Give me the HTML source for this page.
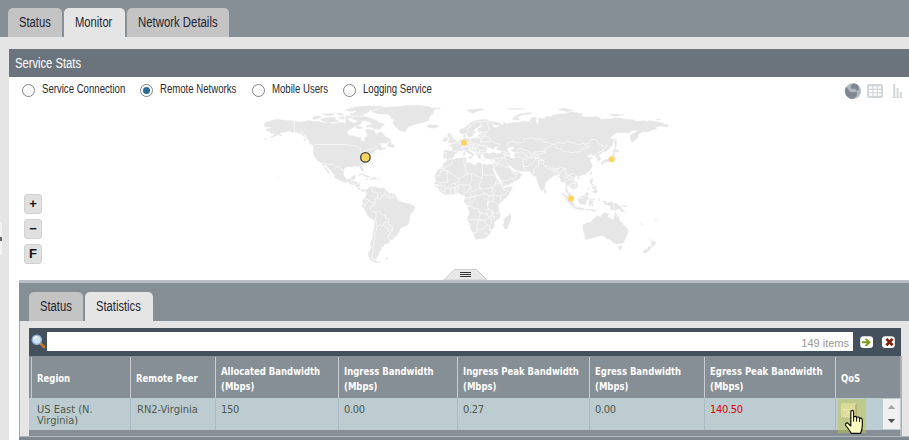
<!DOCTYPE html>
<html><head><meta charset="utf-8">
<style>
*{box-sizing:border-box;margin:0;padding:0}
html,body{width:909px;height:440px;overflow:hidden;background:#fff}
body{position:relative;font-family:"Liberation Sans",sans-serif;color:#222}
.abs{position:absolute}
.nar{position:absolute;white-space:nowrap;transform:scaleX(.8);transform-origin:0 0;line-height:1}
.tab{position:absolute;border-radius:5px 5px 0 0;background:#c4c4c4}
.tab.on{background:#e5e5e5}
.radio{position:absolute;width:13px;height:13px;border-radius:50%;border:1px solid #7d848c;background:#fff}
.zb{position:absolute;left:24px;width:18px;height:20px;background:#e0e0e0;border:1px solid #d2d2d2;border-radius:3px;font:bold 13px/18px "Liberation Sans",sans-serif;text-align:center;color:#111}
.th{position:absolute;top:357px;height:41px;border-left:1px solid #c9cdd1;color:#fff;font:bold 11px/15px "DejaVu Sans Condensed","DejaVu Sans",sans-serif;padding-left:5px;white-space:nowrap}
.th span{display:inline-block;transform:scaleX(.858);transform-origin:0 0}
.num{letter-spacing:-.3px;margin-left:-1px}
.td{position:absolute;top:398px;height:32px;border-left:1px solid #a9bcc5;color:#4d594c;font:11px/11px "DejaVu Sans Condensed","DejaVu Sans",sans-serif;padding:6px 0 0 6px;white-space:nowrap}
</style></head><body>
<!-- top bar -->
<div class="abs" style="left:0;top:0;width:909px;height:37px;background:#868e96"></div>
<div class="abs" style="left:0;top:37px;width:909px;height:403px;background:#e5e5e5"></div>
<div class="tab" style="left:8px;top:8px;width:54px;height:29px"></div>
<div class="tab on" style="left:64px;top:8px;width:61px;height:30px"></div>
<div class="tab" style="left:127px;top:8px;width:102px;height:29px"></div>
<span class="nar" style="left:19px;top:15px;font-size:14px;color:#1e2530">Status</span>
<span class="nar" style="left:75px;top:15px;font-size:14px;color:#1e2530">Monitor</span>
<span class="nar" style="left:138px;top:15px;font-size:14px;color:#1e2530;transform:scaleX(.812)">Network Details</span>
<!-- service stats panel -->
<div class="abs" style="left:9px;top:49px;width:900px;height:28px;background:#6b747d"></div>
<span class="nar" style="left:15px;top:56px;font-size:14px;color:#fff">Service Stats</span>
<div class="abs" style="left:9px;top:77px;width:900px;height:363px;background:#fff"></div>
<!-- radios -->
<div class="radio" style="left:22px;top:84px"></div>
<span class="nar" style="left:42px;top:83px;font-size:12px;color:#2a2a30">Service Connection</span>
<div class="radio" style="left:140px;top:84px"><i style="position:absolute;left:2px;top:2px;width:7px;height:7px;border-radius:50%;background:#2d6b94"></i></div>
<span class="nar" style="left:160px;top:83px;font-size:12px;color:#2a2a30">Remote Networks</span>
<div class="radio" style="left:252px;top:84px"></div>
<span class="nar" style="left:272px;top:83px;font-size:12px;color:#2a2a30">Mobile Users</span>
<div class="radio" style="left:343px;top:84px"></div>
<span class="nar" style="left:363px;top:83px;font-size:12px;color:#2a2a30">Logging Service</span>
<!-- view icons -->
<svg class="abs" style="left:844px;top:82px" width="62" height="18" viewBox="844 82 62 18">
<circle cx="853" cy="91.2" r="8" fill="#b3b9c1"/>
<path d="M846 87.3 L847.8 88.9 L849.4 92 L853.6 92.8 L856.7 92 L856.4 95.2 L854.1 97.9 L850.4 98.5 L846.8 95.9 L845.2 91.5 Z M851.3 85.3 L854.1 83.8 L857.7 85.2 L858.6 89.4 L856.7 90.6 L855.1 87.8 L853 88.9 L851.2 87.8 Z" fill="#7f8791" stroke="#7f8791" stroke-width="0.8" stroke-linejoin="round"/>
<rect x="867" y="84" width="16" height="14" rx="2" fill="#d2d6db"/>
<g fill="#fff"><rect x="869" y="86.5" width="3.3" height="2.2"/><rect x="873.4" y="86.5" width="3.3" height="2.2"/><rect x="877.8" y="86.5" width="3.3" height="2.2"/>
<rect x="869" y="90" width="3.3" height="2.2"/><rect x="873.4" y="90" width="3.3" height="2.2"/><rect x="877.8" y="90" width="3.3" height="2.2"/>
<rect x="869" y="93.5" width="3.3" height="2.2"/><rect x="873.4" y="93.5" width="3.3" height="2.2"/><rect x="877.8" y="93.5" width="3.3" height="2.2"/></g>
<g fill="#d2d6db"><rect x="893.3" y="84" width="2" height="13.5"/><rect x="896.6" y="88" width="2" height="9.5"/><rect x="899.8" y="92" width="2" height="5.5"/><rect x="891.3" y="97" width="11.5" height="0.8"/></g>
</svg>
<!-- MAP -->
<svg class="abs" style="left:240px;top:100px" width="440" height="168" viewBox="240 100 440 168">
<path d="M263.8 125.7L265.5 122.6L269.5 121.3L276.8 119.2L284.2 120.2L294.4 121.2L301.2 121.9L309.1 120.5L312.5 121.3L318.2 121.3L323.9 123.0L329.5 123.0L331.8 124.1L337.4 123.0L343.1 122.4L345.4 123.5L345.9 121.9L345.4 119.0L347.1 118.5L349.9 121.3L352.2 122.4L354.4 123.0L357.3 121.3L361.2 121.3L361.8 123.0L359.0 124.9L355.6 125.8L353.3 127.5L348.8 129.8L347.1 132.0L347.1 133.4L349.3 135.4L354.4 136.0L357.8 137.4L360.9 137.7L361.0 140.0L362.4 141.1L364.1 141.9L364.9 140.5L364.1 138.3L366.9 136.6L367.5 134.3L365.8 132.0L366.3 129.3L370.9 129.4L374.8 130.9L375.4 133.2L377.1 134.0L379.9 132.3L381.0 131.7L383.9 134.9L386.1 137.1L389.0 138.3L390.9 140.5L388.4 141.9L386.1 143.1L380.5 143.1L378.2 144.2L374.8 146.4L376.5 145.1L380.5 144.5L381.3 144.7L380.5 146.2L381.6 147.7L384.4 148.1L386.1 147.3L385.8 148.4L382.2 149.6L379.3 150.7L379.3 149.6L381.0 148.7L378.2 149.0L374.8 150.5L374.0 152.4L374.8 152.8L372.6 153.3L370.3 154.0L370.3 155.3L368.6 156.4L368.0 158.1L368.6 160.1L366.3 161.5L364.6 162.4L362.4 164.3L362.0 166.0L363.5 169.6L363.3 171.5L361.5 170.6L360.3 168.3L360.4 166.6L359.0 166.0L357.3 166.4L354.4 165.7L352.7 166.0L353.1 166.9L351.0 166.8L347.6 166.5L344.2 168.3L343.9 170.6L343.3 174.5L345.4 178.3L347.1 179.4L349.9 178.9L351.4 177.9L351.8 176.2L355.6 175.6L355.0 178.5L354.4 180.2L353.5 182.0L356.7 182.0L359.8 183.0L359.3 185.8L359.5 187.7L361.0 189.8L362.4 190.0L364.1 189.2L366.3 190.1L365.9 191.8L365.2 190.4L363.5 191.7L361.6 190.9L360.1 190.6L357.8 188.7L356.9 187.5L355.0 185.3L354.4 185.0L350.5 184.1L347.6 181.7L344.8 182.2L341.4 181.1L338.6 179.6L335.2 177.9L334.6 175.6L333.5 173.4L331.2 171.1L330.1 169.4L327.2 167.2L326.1 164.5L324.2 164.1L324.2 166.0L326.7 168.9L328.4 171.1L329.5 174.0L327.2 171.9L326.9 170.6L324.6 168.5L324.8 167.2L322.9 165.5L321.5 163.2L319.9 161.5L317.5 160.8L315.9 158.3L315.4 157.2L313.7 154.7L313.3 151.3L313.7 147.7L312.9 145.2L315.4 146.2L314.8 144.5L312.5 143.4L309.7 142.2L309.1 140.5L306.5 138.3L305.2 137.1L302.9 135.4L300.6 133.7L298.4 133.2L295.5 132.3L291.0 132.0L288.2 130.9L285.9 132.0L282.5 132.8L283.1 130.9L280.8 132.6L279.7 133.7L276.3 135.4L272.9 136.9L269.5 137.9L271.8 136.6L275.1 134.3L275.7 133.5L272.9 133.5L270.6 133.2L270.6 132.0L267.2 130.9L266.1 129.8L267.8 128.6L271.8 127.9L271.8 126.9L268.4 126.9L265.5 126.4ZM371.4 111.4L377.1 110.0L380.5 108.3L386.1 107.1L397.5 106.6L408.8 105.4L420.1 105.4L429.2 106.6L431.4 108.3L440.5 107.7L433.7 110.0L433.7 112.8L431.4 115.1L429.2 117.3L429.2 120.2L424.7 121.9L422.4 122.6L416.7 124.1L412.2 125.5L408.8 126.4L406.5 129.2L404.8 132.0L402.0 131.1L399.2 130.3L396.3 127.5L393.5 124.1L392.9 121.3L396.3 120.7L391.8 119.0L390.7 116.2L387.3 113.9L379.3 113.9L374.8 113.0L373.1 112.2ZM363.5 116.5L368.0 117.5L372.6 119.0L377.1 120.7L378.2 122.4L383.9 124.1L384.4 125.2L381.6 126.4L380.5 128.6L379.3 129.8L377.1 129.2L373.7 128.9L372.6 127.5L370.3 126.9L365.8 126.9L366.9 125.8L370.9 124.7L372.0 123.5L369.2 121.9L365.8 120.7L361.2 120.7L357.8 120.7L354.4 119.6L352.7 119.6L352.2 118.5L353.3 116.8L357.8 116.4ZM321.6 120.7L327.2 122.4L335.2 122.1L339.1 121.3L335.2 119.6L335.2 117.3L329.5 117.3L325.0 117.9L320.5 119.0ZM312.5 118.5L314.8 119.2L318.2 118.5L321.6 116.8L319.3 116.0L313.7 116.2ZM352.2 113.4L356.7 111.7L354.4 109.4L349.9 108.0L357.8 106.8L369.2 106.0L380.5 106.2L383.9 107.1L377.1 108.8L372.6 110.0L368.0 110.5L369.2 111.7L365.8 113.4L359.0 113.6ZM349.9 113.4L351.0 115.4L363.5 115.5L363.5 114.1ZM345.9 116.2L351.6 116.2L352.2 117.5L346.5 118.5ZM338.6 117.3L344.2 116.8L344.2 119.0L340.8 119.0ZM321.6 113.9L327.2 115.6L334.0 115.1L334.0 113.9L329.5 113.4ZM336.3 113.4L343.1 113.4L343.1 115.1L338.6 115.1ZM345.4 109.4L352.2 108.8L355.6 110.5L351.0 111.4L345.4 110.0ZM356.7 125.8L362.9 127.5L360.1 128.9L355.6 128.1ZM386.9 146.1L390.7 147.0L394.1 147.2L394.4 146.1L393.5 144.8L391.2 143.6L390.7 141.7L389.2 142.6L387.8 144.5ZM308.8 142.6L312.5 143.1L314.5 145.2L312.0 144.7ZM357.8 175.3L361.2 173.7L363.5 174.0L366.9 175.6L370.1 177.1L366.1 177.6L366.9 176.6L363.5 175.3L361.2 174.7L359.0 175.1ZM369.7 179.2L372.6 177.5L374.8 177.6L376.6 178.9L373.7 179.6ZM365.4 179.2L367.8 179.4L366.9 179.8ZM378.0 179.0L379.8 179.2L379.3 179.7L378.0 179.6ZM366.3 190.1L368.6 187.8L369.4 187.4L372.6 186.2L373.1 187.5L374.8 186.4L377.1 188.0L381.0 188.4L383.9 187.9L385.0 189.2L386.1 190.4L389.5 193.2L392.9 193.3L395.2 194.9L396.3 197.7L397.5 199.4L399.2 200.6L399.7 201.1L403.7 202.8L407.1 203.3L410.5 204.2L414.2 205.9L414.7 208.5L412.2 212.5L409.9 214.7L409.9 218.7L408.8 222.7L407.7 224.9L405.4 226.0L403.1 227.0L399.7 228.9L399.1 231.7L396.9 235.1L394.1 238.3L392.4 239.4L390.1 239.4L388.1 238.5L389.5 240.8L389.0 243.0L383.9 244.2L383.5 246.4L380.5 246.4L381.6 248.1L380.5 251.0L377.6 252.1L379.6 253.8L377.1 256.6L376.0 258.9L376.7 259.5L376.5 261.2L380.3 262.0L378.2 262.6L374.8 262.3L372.6 261.2L370.3 259.5L368.6 256.6L368.6 253.2L370.3 249.8L371.4 247.6L370.5 244.7L370.9 241.9L372.6 238.5L373.1 235.1L373.3 231.7L374.3 228.3L374.6 222.7L374.4 220.7L372.6 219.3L369.2 217.3L367.7 215.6L366.7 213.6L364.6 209.6L363.5 207.4L362.1 206.8L362.0 204.9L363.5 203.7L362.9 202.3L362.4 201.1L363.5 199.4L364.6 198.3L365.2 197.2L366.6 195.7L366.3 192.6L365.9 191.8ZM385.0 258.3L388.4 258.1L387.8 259.1L385.6 259.1ZM443.9 158.1L443.3 156.2L444.1 153.6L443.6 151.3L445.0 150.5L449.6 150.8L452.1 150.8L452.7 148.5L451.3 146.4L448.8 145.6L449.0 145.0L452.3 144.8L452.1 143.7L454.3 143.9L455.9 142.6L458.1 141.8L459.2 140.5L459.8 139.6L462.0 139.4L464.0 139.2L463.5 137.7L463.4 135.4L466.0 134.6L465.7 136.6L465.4 137.7L466.6 138.8L468.3 138.5L470.3 139.0L475.1 138.0L476.8 138.4L477.9 137.1L477.9 135.4L479.0 134.8L481.6 135.2L480.7 133.7L480.7 133.0L485.8 132.5L488.1 132.2L486.4 131.5L482.4 131.8L479.6 132.0L478.2 130.9L478.2 128.6L482.4 126.4L481.3 125.5L479.0 125.8L477.9 127.2L474.5 129.2L473.6 130.9L475.3 132.0L475.4 132.8L472.8 133.7L472.8 136.0L470.3 137.1L468.6 137.1L468.0 136.0L466.8 133.7L466.0 132.6L463.2 134.2L460.6 133.5L459.8 131.5L459.8 129.8L462.6 128.4L465.4 127.5L468.3 125.2L470.0 123.0L472.8 121.9L475.6 120.7L480.1 119.8L483.5 119.6L486.4 119.6L489.2 120.4L488.1 121.1L491.5 121.4L494.9 121.9L500.5 123.3L500.5 124.7L497.1 125.2L493.2 124.5L491.5 124.7L493.4 126.4L493.7 127.2L496.6 127.5L499.4 126.6L499.4 125.5L502.2 124.8L503.9 125.0L503.4 122.4L506.2 123.0L506.2 124.3L508.5 123.3L514.1 122.4L515.3 122.6L520.9 122.1L522.6 121.1L526.6 121.5L531.1 122.4L532.2 122.4L530.0 121.3L530.0 119.6L532.2 117.5L536.2 117.5L536.4 119.6L535.6 121.9L537.3 123.0L536.2 124.7L537.9 124.3L538.5 122.4L539.0 119.6L537.9 118.5L539.6 117.9L542.4 118.5L545.3 118.2L545.8 116.8L551.5 116.4L552.6 115.1L559.4 113.9L565.1 113.7L571.9 112.0L574.2 112.5L581.0 113.4L582.7 114.5L578.7 116.2L582.1 116.5L588.9 117.3L594.5 116.5L599.1 117.3L600.2 119.0L602.5 119.8L604.7 119.0L612.1 119.0L612.7 117.9L619.5 118.1L624.0 118.9L627.4 119.6L634.2 119.8L635.3 121.1L641.0 121.3L644.4 120.7L647.2 121.9L647.8 120.7L653.4 121.1L658.0 122.1L663.6 123.5L669.3 125.2L666.5 126.9L660.2 125.9L656.8 126.9L655.1 126.7L656.8 129.2L652.3 129.8L647.2 132.0L642.1 132.0L639.3 133.7L637.6 134.5L638.7 136.6L637.6 137.9L635.3 140.0L631.9 142.2L630.2 137.7L630.2 135.4L634.2 133.4L636.4 131.5L639.3 129.2L635.3 130.3L631.9 130.3L629.7 132.8L624.0 132.6L616.1 132.8L612.7 134.9L609.8 138.3L613.8 139.7L613.2 142.2L612.7 145.1L608.1 149.6L604.7 151.5L602.5 151.9L601.0 153.6L598.5 155.0L599.6 157.0L600.7 159.2L600.2 160.1L597.4 161.0L597.4 159.2L597.7 158.1L595.7 157.0L595.7 155.0L594.9 154.7L591.7 155.8L592.3 153.9L591.1 153.8L588.9 155.6L587.4 155.8L587.7 157.0L588.9 157.8L590.9 157.2L592.8 157.8L590.6 159.2L589.2 160.4L590.4 161.5L591.1 163.2L592.3 164.9L592.1 166.6L590.6 168.9L589.4 171.1L587.7 172.3L586.0 174.0L583.2 174.7L579.8 175.8L578.7 175.9L579.0 177.0L576.4 175.5L574.7 176.8L573.8 178.5L575.3 180.7L577.0 182.4L577.9 185.3L577.6 187.0L575.3 188.3L573.2 190.1L573.0 188.7L570.8 187.8L570.2 186.4L568.5 185.6L567.9 184.7L567.4 185.8L566.8 188.1L567.7 190.4L568.5 192.3L570.2 193.2L571.3 194.9L571.3 197.2L572.1 198.4L571.3 198.5L568.8 196.8L567.8 193.8L567.0 192.4L565.4 190.7L565.7 188.7L565.9 186.4L564.8 183.0L564.5 181.3L562.3 182.1L560.9 181.9L560.9 179.0L559.4 177.3L558.1 174.7L556.6 175.1L554.9 175.4L552.6 175.8L552.1 177.3L550.4 177.9L547.3 181.1L544.9 182.4L544.9 185.0L544.5 188.3L543.6 189.6L542.7 190.0L541.9 190.9L540.5 189.2L539.0 185.8L538.5 183.6L537.3 181.3L536.6 178.5L536.4 176.2L536.0 176.0L534.5 176.4L533.4 176.0L532.2 174.7L533.4 174.0L531.7 173.4L530.3 171.9L529.4 171.2L524.3 171.5L519.0 170.9L518.1 169.4L515.8 169.9L513.6 168.7L511.6 167.2L510.7 165.8L509.3 165.7L508.5 166.5L509.3 167.7L510.7 169.8L511.0 170.9L512.2 170.6L512.4 172.3L515.3 172.7L517.5 170.6L517.9 170.2L518.1 172.3L520.7 173.4L521.8 174.5L520.4 176.9L519.5 178.5L517.5 179.7L514.1 181.3L513.0 182.3L509.6 184.1L505.1 185.5L503.4 185.6L502.6 183.2L502.2 181.3L500.5 179.0L498.5 175.6L496.3 172.3L494.3 168.3L493.7 166.6L493.1 168.3L492.6 168.5L491.8 167.7L491.0 166.1L490.7 164.7L492.9 164.5L493.6 163.2L494.4 161.2L494.8 159.8L495.1 158.4L493.2 158.3L490.9 159.1L488.6 158.9L486.9 158.4L485.2 158.4L483.9 156.6L484.1 155.3L483.8 154.7L483.5 154.0L481.3 153.8L480.7 154.7L479.8 154.2L480.1 155.5L481.3 157.0L480.1 157.5L480.1 158.7L479.0 158.4L478.2 157.5L477.9 156.1L476.8 155.0L476.1 153.6L476.0 152.4L473.9 151.3L471.7 150.2L470.7 148.9L469.7 149.1L469.5 148.4L468.0 148.7L468.1 149.9L469.5 150.7L470.2 152.0L472.2 152.7L472.2 153.1L475.1 154.5L474.8 154.9L473.4 154.2L472.9 155.0L473.5 155.8L472.8 156.5L471.9 157.0L472.2 155.8L471.9 154.7L470.3 153.9L468.8 153.2L467.7 152.4L466.0 151.3L465.4 150.2L464.1 149.7L462.6 150.4L460.9 151.2L459.5 150.8L458.1 151.0L457.6 152.1L456.6 153.2L454.9 153.8L453.8 155.3L454.1 156.2L453.3 157.3L451.8 158.3L449.0 158.4L447.9 159.2L447.0 158.3L445.8 157.9ZM447.4 159.5L450.8 160.0L453.0 159.6L455.8 158.7L457.5 158.2L462.0 158.1L465.2 157.8L466.6 158.1L466.0 159.2L466.6 160.9L465.4 161.5L466.6 162.4L468.3 162.7L471.4 163.4L473.9 164.9L475.6 165.7L476.8 164.9L476.8 163.2L478.5 162.7L480.1 163.1L482.4 164.1L486.9 165.0L489.2 164.3L490.7 164.7L491.0 166.1L492.0 168.3L493.2 170.6L494.3 172.8L494.5 174.0L496.0 176.2L496.3 178.5L497.7 179.6L498.8 182.4L500.5 183.4L503.0 185.8L503.1 187.0L504.5 188.1L507.3 187.3L512.1 186.5L511.9 188.2L509.6 192.1L508.5 194.9L506.2 197.2L502.8 200.6L501.1 201.9L499.4 203.4L498.5 205.7L498.3 207.4L498.8 209.1L498.8 210.8L500.0 211.9L500.1 216.4L498.8 218.7L496.0 220.2L493.7 222.7L494.3 224.9L494.3 227.2L491.5 228.9L491.2 230.6L490.9 232.3L489.2 234.0L488.1 235.5L485.8 237.4L483.5 238.4L479.0 238.7L476.8 239.4L474.9 238.7L474.7 236.8L473.7 234.0L472.8 232.4L471.3 230.6L470.5 226.0L470.3 224.9L468.3 221.0L467.5 219.3L467.7 217.0L469.4 214.2L469.7 212.5L468.8 210.2L468.0 206.8L467.5 205.1L464.9 202.8L464.1 200.8L464.9 198.9L465.2 196.6L464.2 194.9L462.0 195.0L460.3 193.8L459.2 192.9L456.9 192.9L455.2 193.4L451.8 194.6L449.6 194.1L445.6 195.0L443.6 193.8L441.1 192.2L439.0 190.4L438.8 188.9L437.1 187.8L435.2 186.0L435.1 184.7L434.3 183.4L435.4 181.9L435.6 178.5L434.8 176.2L436.0 173.2L437.7 170.6L439.4 168.6L442.8 166.8L443.1 164.9L443.6 163.2L446.2 161.7ZM509.9 213.6L511.3 217.6L510.4 219.3L507.9 227.2L507.3 228.3L505.1 228.9L503.6 226.6L503.1 224.9L504.3 222.7L503.9 219.3L506.2 217.8L508.5 215.5ZM582.8 224.9L583.2 229.4L584.3 234.0L585.1 236.2L584.3 238.8L587.7 239.6L590.0 238.4L594.5 237.4L596.8 236.6L600.2 235.8L602.7 235.7L605.9 237.0L607.6 239.4L610.2 237.4L609.8 239.6L611.0 240.2L612.3 241.3L613.2 243.0L616.6 243.9L618.3 243.3L619.9 244.3L621.7 242.9L624.0 242.2L624.9 239.6L625.7 237.4L627.2 235.1L628.0 232.3L627.6 228.9L625.1 226.6L623.4 224.9L622.3 222.7L619.8 221.5L619.5 219.8L618.8 217.0L617.2 216.2L616.6 214.2L615.5 212.1L614.6 214.7L614.4 217.6L613.6 219.8L611.9 219.8L610.2 218.1L607.6 217.0L608.1 215.3L608.9 213.8L607.0 213.6L604.2 212.8L602.5 213.9L601.3 215.3L600.8 217.0L599.1 216.8L597.9 215.6L596.2 216.4L594.5 218.5L592.6 219.5L592.5 221.0L591.1 222.2L588.9 222.7L586.3 223.3L583.9 224.7ZM618.0 246.1L622.1 246.3L621.7 248.9L619.5 249.4L618.6 247.9ZM649.7 239.0L651.7 241.0L653.2 241.7L656.3 242.7L654.6 244.7L652.6 247.1L652.1 245.9L650.9 244.5L652.0 243.0L651.4 241.3ZM649.7 245.9L651.5 247.0L649.8 249.6L647.8 251.5L645.5 252.8L642.7 252.1L644.4 250.2L647.2 248.7L648.9 247.0ZM562.0 193.7L564.5 194.1L567.7 196.8L571.3 200.0L572.5 202.3L574.2 203.6L573.9 206.6L572.5 206.6L570.0 204.5L567.9 201.7L565.9 198.3L564.0 196.3ZM573.2 207.7L574.7 206.8L577.0 207.5L579.8 207.4L581.9 207.9L583.8 208.8L583.7 209.9L579.8 209.4L576.4 208.8L573.6 207.9ZM584.9 209.3L588.9 209.4L593.4 209.4L595.1 210.4L597.9 209.5L595.7 211.1L594.0 211.7L591.1 210.2L586.6 210.2ZM577.6 198.3L579.8 198.1L582.1 196.4L584.9 194.3L586.6 192.1L588.9 194.0L587.7 195.2L587.5 197.7L588.9 198.9L587.2 200.0L586.0 202.3L585.5 204.3L583.8 204.5L581.0 203.9L578.9 203.3L578.7 201.5L577.6 199.7ZM589.8 199.2L591.1 198.5L593.4 199.0L595.7 198.2L594.5 199.5L591.1 199.4L590.4 201.1L591.7 201.1L593.7 201.0L592.3 202.3L592.8 204.5L593.4 206.2L591.7 205.3L591.1 203.1L590.4 203.4L590.5 206.2L589.4 206.2L589.4 204.0L588.7 203.1ZM598.5 197.7L599.6 198.9L599.1 200.9L598.5 199.4ZM602.5 200.9L605.9 200.9L607.0 203.7L610.2 201.8L613.8 202.9L617.8 204.3L619.5 206.2L621.5 206.8L620.6 207.7L622.0 209.1L624.6 211.7L621.2 211.3L619.5 209.1L617.2 208.7L616.1 210.2L613.8 210.3L611.0 209.4L610.4 207.9L611.3 207.4L610.2 205.9L607.6 205.0L604.7 204.5L604.5 203.2L605.9 202.6L603.6 202.5ZM622.3 206.2L625.1 205.7L626.6 204.8L626.3 206.2L624.0 207.1ZM590.6 179.0L592.5 179.0L592.3 181.9L591.7 183.9L594.5 185.3L594.0 185.8L591.1 184.5L590.6 183.6L590.0 181.9ZM592.3 186.6L594.5 187.0L596.2 185.8L596.2 188.1L594.0 189.2L592.8 188.7ZM592.3 192.1L594.0 190.4L596.2 188.9L597.4 191.5L596.2 193.4L594.5 192.3ZM587.0 190.4L589.4 187.5L589.2 188.7L587.5 190.6ZM602.4 161.5L604.2 159.8L607.9 159.6L609.3 157.8L611.0 157.8L612.7 155.3L612.7 153.9L613.8 153.1L614.6 154.4L614.9 155.8L613.8 157.2L613.6 159.2L612.9 160.1L612.3 160.0L611.2 160.7L609.3 160.8L609.0 161.9L607.9 162.1L607.0 160.9L604.7 161.2L602.5 161.6ZM601.3 162.1L603.3 161.8L603.0 164.3L601.9 164.7L601.3 163.2ZM604.2 161.6L606.4 161.3L606.2 162.3L604.7 162.9L603.9 162.3ZM613.0 153.0L612.7 151.3L614.6 148.6L616.1 149.8L618.7 150.2L618.9 151.1L616.4 152.4L614.4 151.9ZM614.9 138.5L616.1 140.0L616.6 143.4L616.1 147.1L614.9 147.9L614.9 144.5L614.7 141.1ZM591.7 171.5L592.2 172.3L590.9 175.1L590.1 174.0L591.1 171.7ZM577.2 178.3L579.3 177.3L579.8 177.9L578.1 179.4ZM544.7 189.0L546.7 191.5L545.8 193.0L544.7 193.2L544.4 190.9ZM447.6 143.3L450.1 143.0L453.0 142.6L455.7 142.0L456.0 140.3L454.4 140.0L453.9 138.8L452.4 137.7L451.8 136.7L450.4 136.6L451.8 134.8L449.6 134.6L450.7 133.6L448.4 133.6L447.3 134.9L447.9 136.6L448.7 137.7L450.2 137.8L450.7 139.4L449.0 139.6L449.3 140.5L448.2 141.3L450.1 141.8L449.0 142.2ZM442.8 141.6L447.0 140.9L447.3 139.4L447.9 138.3L446.7 137.4L444.8 137.5L444.5 138.5L442.8 138.8L443.3 140.0ZM426.6 125.8L429.2 124.8L433.7 125.0L436.0 124.7L437.7 125.8L438.6 126.4L437.1 127.2L432.9 128.2L428.6 127.6L429.2 126.9L426.9 126.5L429.2 125.9ZM466.6 110.0L470.0 112.2L472.8 113.2L477.9 111.1L484.7 109.4L480.1 108.8L473.4 109.4ZM512.4 118.9L515.3 119.9L519.2 119.9L517.5 117.0L522.1 115.1L531.1 113.6L532.0 112.8L527.7 112.8L519.8 113.9L516.4 115.6L514.1 117.3ZM561.7 110.5L567.4 111.4L573.0 110.9L567.4 108.8L561.7 108.3L558.3 109.4ZM609.3 114.8L616.1 114.1L624.0 114.8L620.6 115.3L616.1 116.2L611.5 115.4ZM656.3 119.4L660.8 119.2L660.2 119.8L656.8 119.8ZM507.3 108.8L516.4 108.3L524.3 108.3L519.8 109.2L510.7 109.4ZM468.1 157.0L471.8 156.6L471.2 158.4L468.3 157.4ZM463.4 153.6L465.1 153.6L465.0 155.6L463.6 155.8ZM463.8 151.9L464.9 151.3L464.7 153.0L464.1 152.9ZM480.7 159.8L483.9 160.1L481.3 160.4ZM490.7 160.4L493.3 159.6L491.5 160.8ZM279.1 134.9L281.6 134.3L281.4 135.2L279.7 135.7ZM263.8 139.4L267.2 138.5L267.8 138.2L265.0 139.7ZM303.5 138.8L304.9 138.8L305.5 140.9L304.0 140.0ZM639.8 222.9L643.2 225.3L642.5 225.3L639.8 223.4ZM654.9 219.8L656.4 219.8L656.3 220.6L654.9 220.5ZM277.4 177.1L278.5 177.7L277.9 178.5L277.4 177.8Z" fill="#e6e6e6" stroke="#e6e6e6" stroke-width="0.5" stroke-linejoin="round"/>
<path d="M485.8 152.7L486.6 150.2L487.7 148.8L489.0 147.3L491.5 147.9L490.9 148.6L492.0 149.6L494.1 149.1L495.4 148.7L493.7 147.7L496.6 146.8L498.5 146.5L497.1 147.7L496.0 148.7L497.1 149.6L499.1 150.7L501.1 151.6L501.1 153.0L498.3 153.6L495.4 153.2L493.7 152.4L491.8 152.4L489.8 153.3L487.1 153.3ZM507.3 148.5L510.2 147.3L512.4 147.0L514.1 147.3L514.4 148.8L512.1 149.6L511.1 149.8L511.9 151.3L513.8 151.9L513.6 153.3L514.9 153.9L514.1 155.5L515.0 157.8L513.0 158.3L511.0 157.8L509.6 156.6L509.8 154.7L510.5 154.1L508.8 152.1L507.9 151.3L507.3 149.6Z" fill="#fff"/>
<path d="M294.4 121.2L294.4 131.7L296.7 132.0L298.4 133.3L300.6 132.4L302.9 133.7L304.8 135.8L306.9 136.6L306.6 137.7M315.0 144.5L346.3 144.5L347.0 144.8L349.9 145.3L352.7 145.6L354.1 145.3L358.1 146.9L359.5 148.1L360.7 148.7L360.8 151.3L360.0 152.2L360.7 152.8L364.6 151.5L364.6 150.7L367.5 150.3L369.2 149.0L373.1 149.0L374.5 148.0L375.7 146.3L377.1 146.4L377.3 148.1L378.0 148.8M321.5 163.2L324.2 163.0L328.4 164.5L331.6 164.5L331.6 164.0L333.5 164.0L335.7 166.5L337.2 167.2L338.0 166.2L339.3 166.2L341.4 168.9L342.0 170.1L344.0 170.7M349.7 183.6L349.9 182.8L350.2 181.9L351.6 181.9L351.0 180.5L351.0 179.8L353.1 179.8L353.1 181.9L354.1 182.2M353.1 179.8L354.1 179.0M352.1 184.4L352.8 183.7L353.1 183.0L354.1 182.2M353.0 183.7L354.4 184.3L354.8 184.8M355.2 185.3L355.9 184.4L357.8 183.6L359.9 183.0M357.0 187.4L359.3 187.7M360.2 190.8L360.5 189.2M372.9 177.7L372.8 179.6M373.3 186.6L372.0 187.5L371.4 189.6L372.1 190.5L372.6 192.1L374.8 192.1L377.6 193.0L377.3 194.9L377.9 196.8L378.2 198.6M378.2 198.6L379.0 199.1L379.9 199.2L381.6 197.7L382.3 197.5L381.3 195.5L383.0 195.5L385.4 194.1M385.4 194.1L384.6 193.2L386.1 190.4M385.4 194.1L386.1 194.3L386.4 196.0L386.3 197.4L387.5 198.6L389.5 197.7M389.5 197.7L389.2 196.0L388.4 195.5L389.2 194.0L389.4 193.2M389.5 197.7L390.7 197.8L392.3 197.4L394.4 197.5L395.5 195.2M392.3 197.4L392.7 196.0L392.9 193.4M378.2 198.6L375.0 198.1L375.0 198.8L375.7 199.3L374.8 199.4L374.8 200.2L375.5 201.4L374.8 204.8M374.8 204.8L373.9 202.6L371.4 202.6L369.8 200.8L368.8 200.1M368.8 200.1L367.7 199.5L366.4 199.5L364.9 198.4M368.8 200.1L368.7 201.0L367.3 202.9L365.4 203.9L364.6 205.7L363.2 205.0L363.2 203.9M374.8 204.8L371.5 205.9L370.3 208.4L371.4 210.4L372.2 211.3L374.1 210.8L374.1 212.5L375.3 212.5M375.3 212.5L376.3 214.3L375.7 217.3L375.4 219.8L374.4 220.7M375.3 212.5L376.5 212.5L378.8 211.2L380.1 211.1L380.1 213.3L383.9 215.1L385.6 215.6L385.9 218.5L388.1 218.5L388.1 219.6L388.9 220.4L388.4 222.4M388.4 222.4L387.3 221.9L384.2 222.2L383.2 225.1M383.2 225.1L381.3 225.8L380.3 225.0L379.0 224.7L378.0 225.8M375.4 219.8L376.3 222.1L376.9 224.4L377.3 225.8L378.0 225.8M378.0 225.8L376.5 227.7L376.7 230.6L375.2 232.3L374.8 235.1L374.5 237.7L375.0 238.7L374.3 240.8L373.6 242.5L373.8 244.2L372.9 245.9L372.8 248.7L373.1 251.0L372.8 253.2L372.0 255.5L371.1 257.2L372.2 257.8L372.6 258.9L376.6 259.3M376.4 259.7L376.4 262.2M388.4 222.4L388.6 225.0L391.0 225.3L391.4 227.2L392.6 227.3L392.3 229.0M383.2 225.1L385.0 227.0L388.7 228.7L387.7 230.8L390.2 231.0L392.3 229.0M392.3 229.0L393.2 230.2L393.2 230.8L390.9 232.1L388.9 234.2M388.9 234.2L390.7 234.9L393.2 236.4L393.6 238.2M388.9 234.2L388.2 236.8L388.0 238.5M451.6 160.2L452.2 161.8L452.7 163.5L450.0 164.9L447.9 166.1L444.2 167.5L444.2 169.1M439.1 168.6L444.2 168.6M444.2 169.1L444.2 170.6L440.5 170.6L440.5 173.5L439.4 174.0L439.4 175.9L434.8 175.9M444.2 169.1L448.7 171.7M448.7 171.7L446.7 171.7L447.9 181.3L448.1 182.4L443.6 182.4L441.1 182.3L440.3 183.2M440.3 183.2L438.9 181.9L437.7 181.2L435.4 181.9M448.7 171.7L455.5 176.1L455.5 176.6L457.7 177.6L457.8 178.5L458.9 178.4M458.9 178.4L460.7 177.9L467.7 173.4M467.7 173.4L464.9 170.1L465.3 167.9L464.9 165.8M464.9 165.8L464.3 163.6L462.6 161.7L463.5 160.4L463.8 158.2M464.9 165.8L465.8 164.1L467.1 163.3L467.1 162.4M482.4 164.2L482.4 175.1M467.7 173.4L471.1 174.0L472.2 173.5L481.3 177.9L481.3 177.3L482.4 177.3L482.4 175.1M482.4 175.1L495.9 175.1M481.3 177.9L481.3 182.2L480.0 182.3L479.6 184.1L479.2 185.6L480.0 187.5M471.1 174.0L471.7 176.6L472.0 181.3L469.4 183.7L469.4 184.5M458.9 178.4L458.9 181.2L458.1 182.6L455.6 182.7L454.3 183.1M469.4 184.5L468.3 185.2L465.4 184.9L462.6 185.2L460.3 184.3L458.7 184.7L458.2 186.7M454.3 183.1L455.1 184.6L456.5 185.6L456.8 186.5L458.2 186.7M454.3 183.1L451.8 183.9L449.7 184.8L449.1 185.8L448.1 186.6L447.9 188.2M447.9 188.2L445.0 188.4L444.7 187.5L443.9 186.1L441.2 186.2L441.2 185.4L440.3 183.2M441.2 186.0L438.6 185.7L435.2 186.0M438.6 185.7L438.6 186.7L437.1 187.7M435.1 184.6L437.1 184.4L438.5 184.8L437.1 185.0L435.1 185.0M439.0 189.8L441.1 188.7L442.2 189.6L442.4 190.5L441.1 192.2M442.4 190.5L443.6 191.5L444.5 191.4L445.6 195.0M444.5 191.4L445.0 190.4L445.0 188.4M451.0 194.2L450.5 192.3L451.0 189.2L450.8 187.5L453.9 187.4M447.9 188.2L449.0 189.0L451.0 189.2M455.5 193.1L454.8 191.5L454.6 188.7L453.9 187.4L455.1 187.5M455.9 193.0L455.9 189.8L455.0 187.8L455.1 187.5L456.8 186.5M457.2 192.8L457.3 189.8L458.2 188.4L458.2 186.7M463.7 194.7L464.6 192.9L466.9 192.4L468.0 190.4L469.7 187.5L470.6 186.9L470.2 186.0L470.1 185.2L469.4 184.5M470.1 185.2L471.1 186.4L471.1 188.7L469.8 188.7L471.7 191.5M471.7 191.5L475.2 190.9L475.6 189.8L478.7 188.0L480.0 187.5M480.0 187.5L480.8 189.8L481.5 190.6L482.8 191.7L485.1 194.1M471.7 191.5L470.5 193.3L470.7 194.8L472.4 197.5M465.2 197.4L469.2 197.5L472.4 197.5M465.2 198.9L466.9 198.9L466.9 197.4M469.2 197.5L470.5 198.6L469.8 200.2L470.5 200.7L470.4 202.3L468.3 202.6L467.2 203.2L466.7 204.4M472.4 197.5L475.2 196.0M475.2 196.0L475.2 195.0L479.5 195.4L482.4 194.3L485.1 194.1M475.2 196.0L474.3 200.0L472.4 202.3L472.2 204.5L470.4 205.5L468.8 205.2L467.9 206.6M467.9 205.7L468.6 205.0L467.9 206.6L468.8 206.7L472.9 206.7L473.4 208.3L476.2 207.9L476.2 209.1L478.8 209.1L478.9 212.5L481.3 212.3L481.3 214.7M481.3 214.7L479.0 214.7L479.0 218.3L480.6 219.9M467.5 219.6L470.0 219.7L475.1 219.7L480.6 219.9L482.6 220.2M482.6 220.2L480.5 220.4L477.9 220.7L477.9 224.9L476.8 224.9L476.8 228.1M476.8 228.1L476.8 232.2L473.9 232.6L472.8 232.4M476.8 228.1L477.7 230.4L479.8 228.9L483.0 229.1L484.5 227.5L487.4 225.1M487.4 225.1L485.5 223.2L482.8 220.2M487.4 225.1L489.6 225.4L490.3 227.7L490.3 230.4L491.4 230.4M490.3 229.2L489.2 229.4L489.2 230.8L490.3 230.6M489.6 225.4L490.9 224.1L491.5 222.4L491.1 221.0L491.5 218.9L488.5 217.7M482.8 220.2L484.7 220.3L486.8 218.1L488.5 217.7M488.5 217.7L488.3 216.8L491.7 215.9L491.1 215.4L491.5 213.6L491.8 210.8L491.2 210.5M481.3 212.3L482.8 212.7L484.6 213.5L486.9 215.2L487.9 215.2L487.9 213.8L486.3 213.6L486.5 210.8L486.8 209.6L489.0 209.4M489.0 209.4L491.2 210.5M491.8 210.8L492.6 210.8L493.3 213.0L493.1 216.3L494.6 216.6L494.1 219.3L492.9 218.3L491.7 215.9M493.3 213.0L496.6 213.3L500.0 211.9M498.5 205.3L496.7 203.4L492.6 201.1M492.6 201.1L492.6 199.8L493.7 198.1L492.6 195.2M501.1 201.9L500.5 200.9L500.5 196.8L501.6 195.6M492.6 195.2L494.8 194.8L495.0 195.0L497.1 195.9L498.8 196.1L500.5 195.6L501.6 195.6M501.6 195.6L502.8 194.7L505.1 194.3L508.5 190.9L507.3 190.9L503.9 189.8L502.8 187.9L502.6 187.7M502.1 186.0L500.3 184.0L498.3 183.5L497.0 183.1L495.4 183.8M495.4 183.8L495.0 185.6L493.9 186.6L492.9 188.0L492.7 190.3L491.5 191.1L492.6 191.8L494.1 193.9L494.8 194.8M480.8 189.8L482.4 188.3L484.7 189.1L486.9 188.7L489.2 188.9L490.8 186.7L491.7 186.2L491.6 187.9L492.7 189.2M485.1 194.1L487.5 195.0L489.0 196.0L489.4 195.7L492.6 195.2M489.0 196.0L489.6 197.5L487.7 199.1L487.6 201.6M487.6 201.6L487.2 202.9L487.4 205.1L487.4 206.8L489.0 209.4M487.6 201.6L488.6 201.1L492.6 201.1M488.6 201.1L489.0 202.6L488.6 204.0L488.1 205.0L487.4 205.1M486.9 203.1L489.0 202.7M484.7 233.5L485.8 232.5L487.3 233.0L487.2 234.0L486.0 234.7L485.1 234.2L484.7 233.5M495.4 183.8L496.0 180.7L497.7 179.6M502.1 186.0L501.4 187.0L502.6 187.7L503.0 187.0M444.1 152.5L444.8 152.4L446.6 152.5L447.1 152.9L446.3 153.6L446.2 155.0L445.6 155.1L446.2 156.7L445.7 157.9M452.1 150.8L454.9 151.5L457.6 152.0M456.9 142.1L458.9 143.4L460.7 143.9L461.3 143.9L463.4 144.5L462.7 146.1M462.7 146.1L461.0 147.7L462.0 148.0L461.6 148.9L462.8 150.1L462.6 150.4M462.7 146.1L465.0 146.2L466.0 146.9L464.6 147.3L464.3 148.1L463.6 147.4L462.0 148.0M458.0 141.8L459.8 141.7L460.8 142.5L461.0 143.3L460.7 143.9M460.8 142.5L461.0 141.2L462.0 140.9L462.3 139.6M463.8 137.8L465.3 137.9M470.2 139.0L470.1 140.2L470.7 141.1L471.1 142.2M471.1 142.2L467.8 143.0L469.7 144.7M469.7 144.7L468.7 146.0L466.0 146.2L465.0 146.2M466.0 146.9L467.9 146.8L469.6 147.3L472.3 147.0M469.7 144.7L471.1 144.5L473.4 144.8L473.5 145.6L472.3 147.0M471.1 142.2L473.1 143.0L475.4 143.9L479.7 144.4M473.4 144.8L475.4 143.9M479.7 144.4L481.4 142.7L480.8 141.7L480.8 140.4L481.2 139.0L479.9 138.4L476.5 138.4M477.9 136.5L482.4 136.2L484.2 136.9M481.6 134.4L485.1 134.9M486.0 132.6L485.1 134.9L486.0 136.3L484.2 136.9L483.3 137.8L481.2 139.0M479.9 138.4L479.9 137.6L478.1 137.4M485.6 131.5L489.8 128.8L488.1 125.6L487.1 124.2L488.1 123.3L486.5 122.0L486.9 121.7L489.0 120.9M481.4 125.5L480.8 123.1L477.4 121.7L483.2 121.6L485.8 120.7L486.9 121.7M477.4 121.7L474.5 122.4L472.2 124.1L470.5 125.1L470.0 127.5L467.9 128.1L467.9 130.3L468.3 131.8L467.1 133.2M480.8 141.7L488.6 141.8L490.1 141.0M490.1 141.0L492.6 140.8L494.4 142.9L497.1 143.5L499.4 143.8L499.2 145.7L497.4 146.7M486.0 136.3L489.1 137.0L490.1 139.1L490.1 141.0M479.7 144.4L479.2 145.2L482.2 145.9L484.2 145.3L486.0 148.5L487.7 148.8M484.2 145.3L487.2 145.6L488.1 147.4L486.0 148.5M479.2 145.2L477.9 147.7L477.1 147.8L479.7 149.6L479.8 149.9L482.4 150.5L484.7 150.1L486.5 150.5M472.3 147.0L473.4 148.0L475.4 148.0L477.1 147.8M473.5 145.6L475.4 145.9L477.3 145.1L479.2 145.2M479.8 149.9L479.5 152.1L480.0 153.2L483.9 152.8L485.8 152.4M483.9 152.8L483.9 153.7M476.8 155.0L477.9 153.8L480.0 153.2M476.1 152.5L477.3 152.2L477.3 153.6L477.9 153.8M477.3 152.2L479.5 152.1M477.3 152.2L475.8 150.7L475.6 149.1L475.4 148.0M469.6 147.3L469.7 148.4M469.6 148.5L471.4 148.5L472.8 147.3M472.0 148.8L473.9 148.9L475.6 149.1M472.0 148.8L472.4 149.9L474.0 151.3L475.1 151.9L475.8 150.7M494.9 159.2L495.7 158.3L497.1 158.3L502.0 157.9L504.8 157.9L504.5 155.8L504.8 155.0L503.6 154.5L503.4 153.5L501.1 153.0M499.4 150.8L502.8 151.1L504.5 151.6L506.8 152.7L508.2 153.3L509.0 152.7M503.4 153.5L505.1 153.2L506.8 152.7M505.1 153.2L506.8 155.3L506.8 155.9L504.8 155.0M506.8 155.9L508.5 155.1L509.5 156.5M502.0 157.9L500.8 160.6L498.0 162.2L495.8 163.4L494.5 163.0M494.5 163.0L494.3 164.4L493.7 166.6M493.9 162.5L495.6 161.3L494.9 160.8M492.9 164.5L493.6 166.6M493.7 166.7L495.0 166.9L496.6 166.0L497.1 165.5L496.0 164.3L498.3 163.6L498.0 162.2M498.3 163.6L499.9 163.9L501.7 164.8L504.7 166.9L506.8 167.0L507.9 166.0L508.5 166.0M506.8 167.0L507.9 167.6L508.9 167.7M504.8 157.9L506.2 159.5L505.5 161.5L506.2 162.6L508.2 164.0L509.1 166.0M502.6 181.4L503.0 180.3L505.1 180.3L507.3 180.7L509.6 178.9L513.0 178.5M513.0 178.5L516.4 177.3L517.1 175.1L516.6 174.3L513.7 174.1L512.5 172.6M513.0 178.5L514.2 181.1M516.6 174.3L517.5 172.8L517.9 171.0M511.6 172.0L512.1 172.1M515.1 157.8L517.5 157.0L519.0 156.6L521.3 157.5L523.4 158.5L523.4 159.7M523.4 159.7L522.7 162.1L523.1 164.3L524.1 164.4L523.1 166.2L524.2 167.7L525.2 169.2L525.7 169.9L523.9 171.5M523.1 166.2L526.6 166.7L529.2 166.1L529.3 164.9L532.6 163.9L532.8 162.5L534.5 161.5L535.2 158.8L538.5 157.9M523.4 159.7L527.2 158.9L529.4 157.6L531.1 158.1L533.4 157.4L535.1 156.6L535.1 158.3L538.5 157.9M513.6 152.7L516.1 152.4L517.5 153.2L518.7 153.2L520.4 151.6L522.1 152.2L524.2 153.5L524.8 154.7L526.8 155.9L529.4 157.6M517.5 153.2L517.5 149.0L520.5 148.4L523.3 149.8L527.6 150.5L529.0 151.3L528.9 152.4L531.1 153.6L534.4 152.1M509.6 147.3L507.3 145.6L506.8 145.2L507.9 142.9L509.3 142.7L511.6 141.4L514.7 142.0L516.4 142.6L519.2 142.2L521.6 142.7L523.9 141.9L524.0 140.0L523.2 138.8L527.7 138.4L531.3 137.7L534.5 138.6L537.3 139.1L541.1 138.4L542.3 139.6L544.7 142.5L548.6 142.2L550.7 143.8L553.0 144.3M553.0 144.3L551.2 145.2L551.1 146.7L548.1 146.5L547.3 148.5L544.7 149.0L544.9 152.1M544.9 152.1L543.7 151.5L539.8 151.3L537.3 151.9L534.5 151.8L534.4 152.1M544.9 152.1L542.9 153.2L541.1 153.7L537.7 154.9M537.7 154.9L537.7 156.4L538.9 156.5L538.5 157.9M537.7 154.9L535.1 155.3L533.9 154.5L534.4 152.1M531.1 158.1L530.9 155.3L533.9 154.5M553.0 144.3L555.7 143.7L558.6 142.5L561.2 143.4L564.3 143.6L565.4 141.7L567.2 141.4L569.9 141.9L570.0 142.7L573.4 142.9L575.3 143.1L577.0 144.0L579.5 144.3L582.2 143.6L583.8 143.1L586.3 143.5M553.0 144.3L553.8 145.0L556.4 146.0L557.2 148.8L560.0 149.0L562.2 149.8L563.3 151.6L568.5 151.8L572.9 152.9L575.7 152.0L578.7 151.8L580.8 150.5L580.3 149.7L582.8 149.3L586.2 147.6L589.7 147.1L589.8 146.7L587.5 146.0L585.0 145.7L585.5 144.7L586.3 143.5M586.3 143.5L589.2 143.0L590.0 141.4L590.9 139.6L594.1 139.4L596.4 140.0L598.5 143.6L602.0 144.6L602.1 146.0L604.2 146.0L607.0 145.2L604.8 148.9L602.8 149.1L602.5 151.3L602.0 152.0M602.0 152.0L601.2 151.3L599.1 152.4L597.8 152.7L595.0 154.6M597.6 157.2L599.5 156.3M576.4 175.5L574.9 175.1L573.5 173.6L569.7 174.6L569.3 176.1L568.7 175.5L566.5 175.0L566.1 172.7L564.5 172.0L565.9 168.7L564.4 168.1M564.4 168.1L563.1 169.1L561.8 170.4L561.2 172.0L559.8 172.8L559.9 175.1L559.0 175.6L558.6 176.6M559.0 175.6L557.6 174.0L558.6 171.8L555.8 171.3L554.2 170.1L553.9 172.3L554.9 175.1M564.4 168.1L561.7 166.9L558.3 168.5L554.9 169.1L553.9 168.4L551.5 168.3L549.1 166.8L546.0 165.8L543.3 164.7L543.2 163.1L544.0 161.0L542.2 159.8M546.0 165.8L544.8 167.4L548.4 169.0L551.3 169.9L553.9 170.1L553.9 168.4M554.9 169.1L555.8 169.8L558.3 169.6L558.3 168.5M531.3 173.2L534.5 172.4L533.4 169.4L535.6 168.3L537.2 166.0L538.7 164.8L538.5 162.9L539.4 163.4L542.2 159.8M538.5 162.9L537.9 160.7L542.2 159.8M538.5 157.9L540.2 159.2L542.2 159.8M565.7 188.7L566.5 186.7L565.3 183.0L566.1 181.4L564.4 179.0L565.1 177.7L567.5 177.0M567.5 177.0L567.9 177.9L568.7 180.2L569.7 179.4L571.9 179.3L572.8 181.4L573.7 182.7L573.2 183.8M573.2 183.8L570.8 183.9L570.1 184.7L570.6 186.7M573.2 183.8L574.2 183.7L575.9 183.4L575.9 186.0L574.2 186.7L573.9 187.7L572.5 188.2M575.9 183.4L575.9 181.9L574.7 180.9L573.0 178.8L571.8 178.1L572.9 177.1L570.8 176.3L569.7 174.6M567.5 177.0L568.7 175.5M567.5 192.8L568.6 193.5L569.7 193.0M578.2 197.7L579.3 199.0L580.7 198.9L582.1 198.3L583.9 198.3L584.9 196.6L585.1 195.2L587.3 195.2M583.4 194.8L584.3 195.1L584.6 194.5M613.8 202.9L613.8 210.3M594.7 210.6L595.8 210.5L595.7 209.9" fill="none" stroke="#fff" stroke-width="0.6" stroke-linejoin="round"/>
<circle cx="463.9" cy="142.7" r="3" fill="#ffd45e"/>
<circle cx="611.8" cy="159.3" r="3" fill="#ffd45e"/>
<circle cx="571.1" cy="198.4" r="3" fill="#ffd45e"/>
<circle cx="365.4" cy="157.4" r="4.7" fill="#ffd45e" stroke="#3a3a3a" stroke-width="1.3"/>
</svg>
<!-- zoom buttons -->
<div class="zb" style="top:194px">+</div>
<div class="zb" style="top:219px">&#8722;</div>
<div class="zb" style="top:244px">F</div>
<!-- left collapse handle -->
<div class="abs" style="left:0;top:222px;width:2px;height:33px;background:#f2f2f2"></div>
<div class="abs" style="left:0;top:237px;width:2px;height:4px;background:#666"></div>
<!-- splitter handle -->
<svg class="abs" style="left:440px;top:266px" width="52" height="15" viewBox="440 266 52 15">
<path d="M443.8 280 L454.2 269.5 L476.6 269.5 L487 280 Z" fill="#e8e8e8" stroke="#c4c4c4" stroke-width="0.8"/>
<g fill="#333"><rect x="460" y="272" width="11" height="1"/><rect x="460" y="274" width="11" height="1"/><rect x="460" y="276" width="11" height="1"/></g>
</svg>
<!-- bottom panel -->
<div class="abs" style="left:19px;top:280px;width:890px;height:160px;background:#868e96"></div>
<div class="abs" style="left:19px;top:280px;width:890px;height:3px;background:#b9bec4"></div>
<div class="abs" style="left:19px;top:321px;width:890px;height:115px;background:#e5e5e5;border-left:1px solid #a3a9af"></div>
<div class="tab" style="left:29px;top:292px;width:54px;height:29px"></div>
<div class="tab on" style="left:85px;top:292px;width:68px;height:30px"></div>
<span class="nar" style="left:40px;top:299px;font-size:14px;color:#1e2530">Status</span>
<span class="nar" style="left:96px;top:299px;font-size:14px;color:#1e2530">Statistics</span>
<!-- search bar -->
<div class="abs" style="left:29px;top:328px;width:872px;height:28px;background:#44505b"></div>
<div class="abs" style="left:47px;top:332px;width:805.5px;height:19.3px;background:#fff"></div>
<span class="abs" style="left:753px;top:337px;width:96px;text-align:right;font-size:11px;line-height:13px;color:#999">149 items</span>
<svg class="abs" style="left:31px;top:334px" width="15" height="15" viewBox="0 0 15 15">
<path d="M8.5 8.5 L13 13" stroke="#c77a2a" stroke-width="2.6" stroke-linecap="round"/>
<circle cx="5.8" cy="5.8" r="4.6" fill="#cfe3f6" stroke="#8fb4dc" stroke-width="1.3"/>
<path d="M3 5 a3 3 0 0 1 3 -2.4" stroke="#fff" stroke-width="1.2" fill="none"/>
</svg>
<svg class="abs" style="left:859px;top:335px" width="38" height="15" viewBox="859 335 38 15">
<rect x="860.2" y="336.2" width="12.8" height="11.9" rx="3.3" fill="#fff"/>
<path d="M861.8 341.3 h5 l-2.300 -2.600 h2.500 l3.900 3.600 l-3.900 3.600 h-2.500 l2.300 -2.600 h-5 z" fill="#7d9b1f"/>
<rect x="882" y="336.200" width="12.800" height="11.900" rx="3.300" fill="#fff"/>
<path d="M886.400 338.900 L892.600 345.300 M892.600 338.900 L886.400 345.300" stroke="#7d2006" stroke-width="2.700" stroke-linecap="butt"/>
</svg>
<!-- table -->
<div class="abs" style="left:29px;top:356px;width:872px;height:80px;background:#868e96"></div>
<div class="abs" style="left:900px;top:356px;width:2px;height:80px;background:#aab0b6"></div>
<div class="abs" style="left:29px;top:398px;width:872px;height:32px;background:#bdccd1"></div>
<div class="th" style="left:31px;width:99px;padding-top:13.6px"><span>Region</span></div>
<div class="th" style="left:130px;width:85px;padding-top:13.6px"><span>Remote Peer</span></div>
<div class="th" style="left:215px;width:123px;padding-top:6.6px"><span>Allocated Bandwidth<br>(Mbps)</span></div>
<div class="th" style="left:338px;width:119px;padding-top:6.6px"><span>Ingress Bandwidth<br>(Mbps)</span></div>
<div class="th" style="left:457px;width:132px;padding-top:6.6px"><span>Ingress Peak Bandwidth<br>(Mbps)</span></div>
<div class="th" style="left:589px;width:115px;padding-top:6.6px"><span>Egress Bandwidth<br>(Mbps)</span></div>
<div class="th" style="left:704px;width:131px;padding-top:6.6px"><span>Egress Peak Bandwidth<br>(Mbps)</span></div>
<div class="th" style="left:835px;width:65px;padding-top:13.6px"><span>QoS</span></div>
<div class="td" style="left:31px;width:99px;border-left:none">US East (N.<br>Virginia)</div>
<div class="td" style="left:130px;width:85px">RN2-Virginia</div>
<div class="td" style="left:215px;width:123px" ><span class="num">150</span></div>
<div class="td" style="left:338px;width:119px" ><span class="num">0.00</span></div>
<div class="td" style="left:457px;width:132px" ><span class="num">0.27</span></div>
<div class="td" style="left:589px;width:115px" ><span class="num">0.00</span></div>
<div class="td" style="left:704px;width:131px;color:#dc0000" ><span class="num">140.50</span></div>
<div class="td" style="left:835px;width:48px"></div>
<!-- scrollbar -->
<div class="abs" style="left:883px;top:399px;width:17px;height:30px;background:#f0f0f0"></div>
<svg class="abs" style="left:883px;top:399px" width="17" height="30" viewBox="0 0 17 30"><path d="M4.8 10 L8.5 6 L12.2 10 Z" fill="#a3a3a3"/><path d="M4.8 20 L8.5 24 L12.2 20 Z" fill="#505050"/></svg>
<!-- qos highlight + icon + cursor -->
<div class="abs" style="left:838px;top:399px;width:28px;height:34px;background:rgba(190,200,70,.5)"></div>
<svg class="abs" style="left:838px;top:399px" width="30" height="38" viewBox="838 399 30 38">
<rect x="841" y="403.200" width="16" height="15.500" fill="#dddb98"/>
<path d="M857 403.200 V418.700 H841 L842.800 417 H855.200 V405 Z" fill="#b3b178"/>
<path d="M842.800 417 H855.200 L857 418.700 H841 Z" fill="#c6c488"/>
<path d="M843.500 409.500 H853 L843.500 416.800 H853 Z" fill="none" stroke="#e9e7b4" stroke-width="0.900"/>
<path d="M850.8 421.500 L850.8 411.900 Q850.8 410.400 852.200 410.400 Q853.600 410.400 853.600 411.900 L853.600 417.400 Q853.900 416.300 855.100 416.300 Q856.500 416.300 856.600 417.800 Q856.900 416.900 858.100 417 Q859.500 417.100 859.600 418.600 Q860 417.900 861 418.100 Q862.300 418.400 862.300 420 L862.300 425.500 Q862.300 429.500 860.600 433.300 L851.200 433.300 Q849.500 430 846.500 426.500 Q844.900 424.600 845.800 423.500 Q847 422.300 848.600 423.800 L850.800 426 Z" fill="#ffffc2" stroke="#0a0a0a" stroke-width="1.150" stroke-linejoin="round"/>
<path d="M853.600 417.400 V421.600 M856.600 417.800 V421.600 M859.600 418.600 V421.900" stroke="#0a0a0a" stroke-width="1" fill="none"/>
</svg>
<!-- bottom strip -->
<div class="abs" style="left:19px;top:436px;width:890px;height:4px;background:#7f8890"></div>
<div class="abs" style="left:19px;top:436px;width:890px;height:1px;background:#b2b7bc"></div>
</body></html>
